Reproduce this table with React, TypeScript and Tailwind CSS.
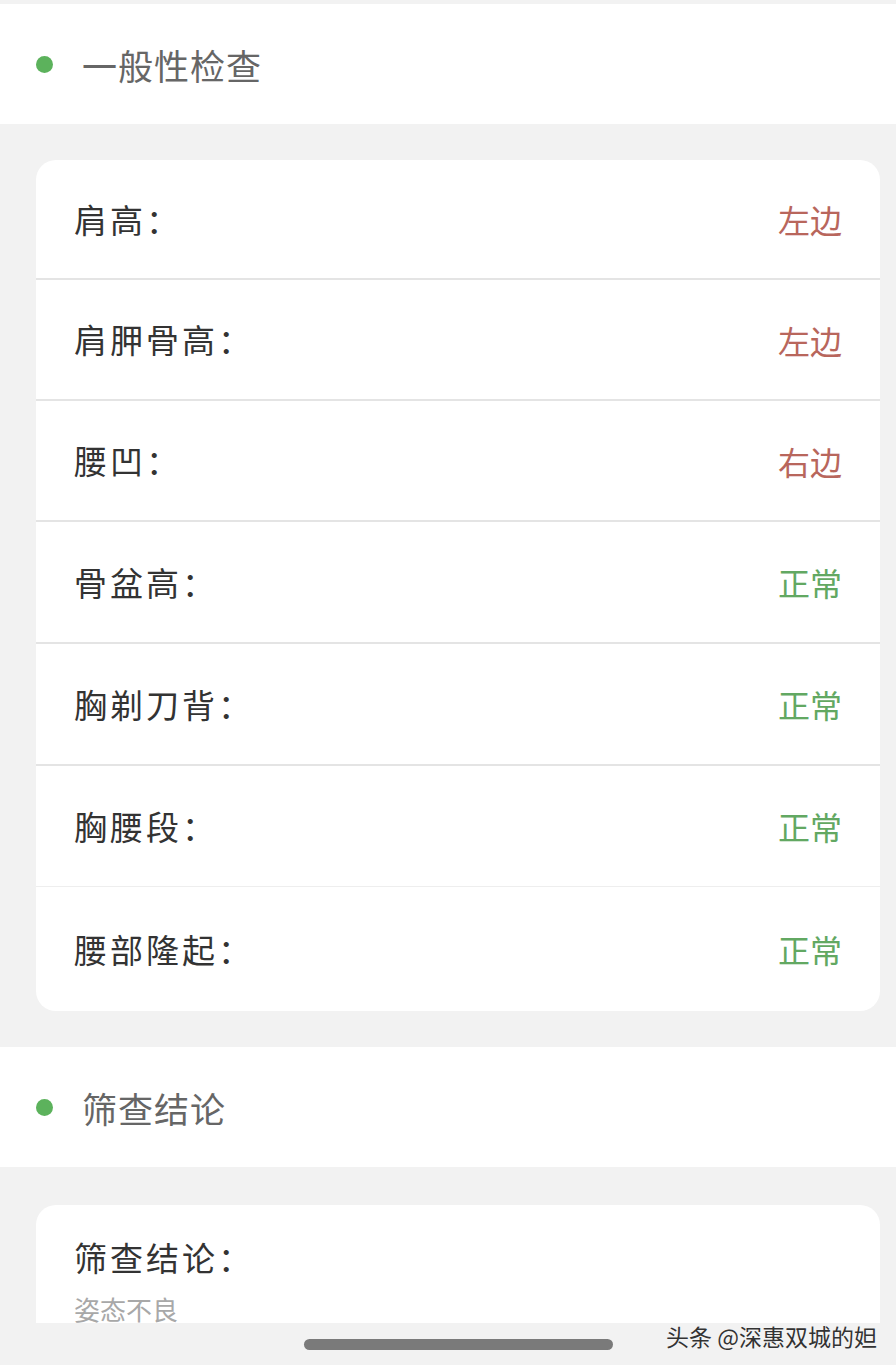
import React from "react";

const rows: { label: string; value: string; tone: "red" | "green"; h: string }[] = [
  { label: "肩高", value: "左边", tone: "red", h: "h-[120px]" },
  { label: "肩胛骨高", value: "左边", tone: "red", h: "h-[121px]" },
  { label: "腰凹", value: "右边", tone: "red", h: "h-[121px]" },
  { label: "骨盆高", value: "正常", tone: "green", h: "h-[122px]" },
  { label: "胸剃刀背", value: "正常", tone: "green", h: "h-[122px]" },
  { label: "胸腰段", value: "正常", tone: "green", h: "h-[121px]" },
  { label: "腰部隆起", value: "正常", tone: "green", h: "h-[124px]" },
];

function SectionHeader({ title }: { title: string }) {
  return (
    <div className="flex h-[120px] items-center bg-white pl-[36px]">
      <span className="h-[17px] w-[17px] rounded-full bg-[#5cb25c]" />
      <span className="ml-[29px] text-[35px] leading-none tracking-[1px] text-[#666666]">{title}</span>
    </div>
  );
}

export default function App() {
  return (
    <div
      className="flex h-[1365px] w-[896px] flex-col overflow-hidden bg-[#f2f2f2]"
      style={{ fontFamily: '"Noto Sans CJK SC", "Noto Sans", sans-serif' }}
    >
      <div className="h-[4px] shrink-0" />
      <div className="shrink-0">
        <SectionHeader title="一般性检查" />
      </div>
      <div className="h-[36px] shrink-0" />
      <div className="ml-[36px] mr-[16px] shrink-0 overflow-hidden rounded-[20px] bg-white">
        {rows.map((r, i) => (
          <div
            key={r.label}
            className={`flex items-center justify-between pl-[38px] pr-[38px] ${r.h} ${
              i < rows.length - 2
                ? "border-b-2 border-[#e4e4e4]"
                : i === rows.length - 2
                ? "border-b border-[#eeeeee]"
                : ""
            }`}
          >
            <span className="text-[33px] leading-none tracking-[3px] text-[#333333]">{r.label}：</span>
            <span
              className={`text-[32px] leading-none ${
                r.tone === "red" ? "text-[#b8665c]" : "text-[#62a862]"
              }`}
            >
              {r.value}
            </span>
          </div>
        ))}
      </div>
      <div className="h-[36px] shrink-0" />
      <div className="shrink-0">
        <SectionHeader title="筛查结论" />
      </div>
      <div className="h-[38px] shrink-0" />
      <div className="ml-[36px] mr-[16px] h-[118px] shrink-0 overflow-hidden rounded-t-[20px] bg-white px-[38px] pt-[36px]">
        <div className="text-[33px] leading-none tracking-[3px] text-[#333333]">筛查结论：</div>
        <div className="mt-[22px] text-[26px] leading-none text-[#a8a8a8]">姿态不良</div>
      </div>
      <div className="relative flex h-[42px] shrink-0 items-center">
        <div className="ml-[304px] h-[11px] w-[309px] rounded-full bg-[#7a7a7a]" />
        <div className="absolute left-[666px] top-[0px] text-[23px] leading-[26px] text-[#333333] [text-shadow:0_0_1px_#fff]">
          头条 @深惠双城的妲
        </div>
      </div>
    </div>
  );
}
